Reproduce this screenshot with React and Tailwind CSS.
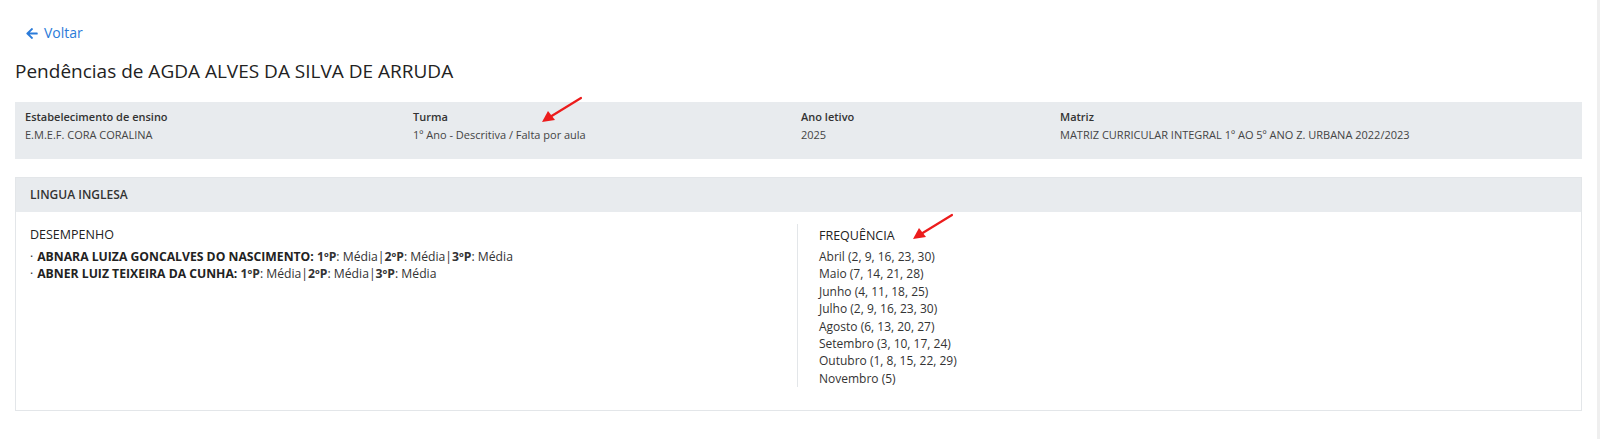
import React from 'react'

const INFO = [
  { label: 'Estabelecimento de ensino', value: 'E.M.E.F. CORA CORALINA', w: 'w-[388px]' },
  { label: 'Turma', value: '1º Ano - Descritiva / Falta por aula', w: 'w-[388px]' },
  { label: 'Ano letivo', value: '2025', w: 'w-[259px]' },
  { label: 'Matriz', value: 'MATRIZ CURRICULAR INTEGRAL 1º AO 5º ANO Z. URBANA 2022/2023', w: 'flex-1' },
]

const ALUNOS = ['ABNARA LUIZA GONCALVES DO NASCIMENTO', 'ABNER LUIZ TEIXEIRA DA CUNHA']

const MESES = [
  'Abril (2, 9, 16, 23, 30)',
  'Maio (7, 14, 21, 28)',
  'Junho (4, 11, 18, 25)',
  'Julho (2, 9, 16, 23, 30)',
  'Agosto (6, 13, 20, 27)',
  'Setembro (3, 10, 17, 24)',
  'Outubro (1, 8, 15, 22, 29)',
  'Novembro (5)',
]

function RedArrow({ className }) {
  return (
    <svg className={className} width="44" height="28" viewBox="0 0 44 28" fill="none">
      <line x1="41" y1="2" x2="10" y2="21" stroke="#ec1c1c" strokeWidth="2.2" strokeLinecap="round" />
      <polygon points="2,26 8,15 15,24" fill="#ec1c1c" />
    </svg>
  )
}

export default function App() {
  return (
    <div className="relative min-h-[439px] bg-white text-[#333] flex" style={{ fontFamily: '"Open Sans", "Noto Sans", sans-serif' }}>
      <div className="flex-1 pl-[15px] pr-[15px] pt-[23px]">
        {/* Voltar */}
        <a className="flex items-center gap-[6px] ml-[11px] text-[14px] text-[#2b7bd9] leading-[20px] w-fit">
          <svg width="12" height="13" viewBox="0 0 448 512" fill="currentColor">
            <path d="M257.5 445.1l-22.2 22.2c-9.4 9.4-24.6 9.4-33.9 0L7 273c-9.4-9.4-9.4-24.6 0-33.9L201.4 44.7c9.4-9.4 24.6-9.4 33.9 0l22.2 22.2c9.5 9.5 9.3 25-.4 34.3L136.6 216H424c13.3 0 24 10.7 24 24v32c0 13.3-10.7 24-24 24H136.6l120.5 114.8c9.8 9.3 10 24.8.4 34.3z" />
          </svg>
          Voltar
        </a>

        <h1 className="mt-[15px] text-[19px] leading-[26px] text-[#222]">Pendências de AGDA ALVES DA SILVA DE ARRUDA</h1>

        {/* Info */}
        <div className="mt-[18px] bg-[#e8ebee] h-[57px] flex pl-[10px] pt-[6px] text-[11px]">
          {INFO.map((i) => (
            <div key={i.label} className={i.w}>
              <p className="font-semibold leading-[17px] text-[#333]">{i.label}</p>
              <p className="mt-[1px] leading-[17px] text-[#444]">{i.value}</p>
            </div>
          ))}
        </div>

        {/* Disciplina */}
        <div className="mt-[18px] border border-[#e3e6e9]">
          <div className="bg-[#e8ebee] h-[34px] flex items-center pl-[14px] text-[12px] font-semibold text-[#333]">
            LINGUA INGLESA
          </div>
          <div className="flex pt-[12px] pb-[23px] text-[12px]">
            <div className="w-[781px] pl-[14px] pt-[2px]">
              <p className="leading-[18px] text-[12.5px] text-[#222]">DESEMPENHO</p>
              <div className="mt-[4px] text-[12.2px] leading-[17.4px]">
                {ALUNOS.map((a) => (
                  <p key={a}>
                    <span className="mr-[4px]">·</span>
                    <b className="font-bold text-[#222]">{a}:</b>{' '}
                    <b>1ºP</b>: Média|<b>2ºP</b>: Média|<b>3ºP</b>: Média
                  </p>
                ))}
              </div>
            </div>
            <div className="flex-1 border-l border-[#e3e6e9] pl-[21px] pt-[3px]">
              <p className="leading-[18px] text-[12.5px] text-[#222]">FREQUÊNCIA</p>
              <div className="mt-[3px] text-[12px] leading-[17.4px]">
                {MESES.map((m) => (
                  <p key={m}>{m}</p>
                ))}
              </div>
            </div>
          </div>
        </div>
      </div>
      <div className="w-[3px] bg-[#efefef]" />

      <RedArrow className="absolute left-[540px] top-[96px]" />
      <RedArrow className="absolute left-[911px] top-[213px]" />
    </div>
  )
}
